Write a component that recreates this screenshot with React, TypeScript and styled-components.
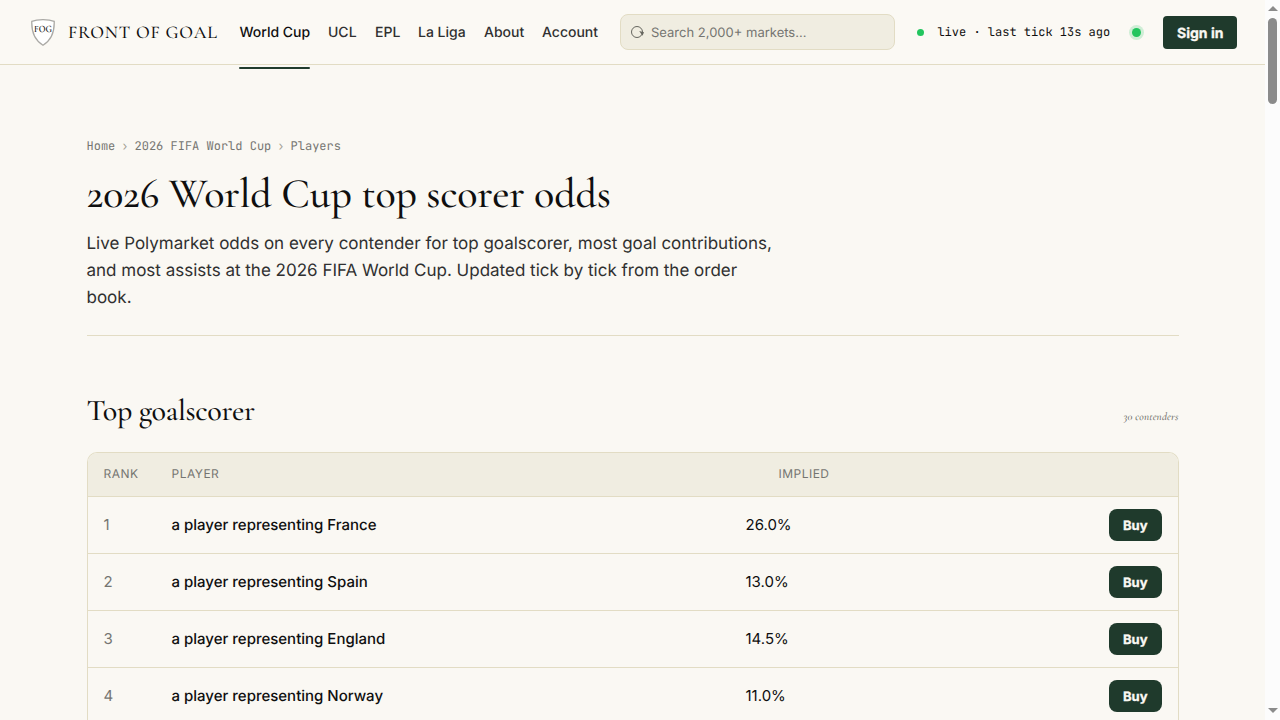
import React from "react";
import styled, { createGlobalStyle } from "styled-components";

const sans = `Inter, "Liberation Sans", sans-serif`;
const serif = `"Cormorant Garamond", "Liberation Serif", serif`;
const mono = `"JetBrains Mono", "DejaVu Sans Mono", monospace`;
const c = {
  bg: "#faf8f3",
  panel: "#f0ede1",
  line: "#e2dcc4",
  ink: "#0f0f0f",
  body: "#303030",
  muted: "#757571",
  green: "#1f3a2c",
  live: "#22c55e",
};

const GlobalStyle = createGlobalStyle`
  * { box-sizing: border-box; }
  body { margin: 0; background: ${c.bg}; color: ${c.ink}; font-family: ${sans}; overflow: hidden; text-rendering: geometricPrecision; }
  button { text-rendering: inherit; }
  h1, h2, p { margin: 0; font-weight: 400; }
`;

const Viewport = styled.div`
  display: flex;
  width: 1280px;
  height: 720px;
  overflow: hidden;
`;
const Page = styled.div`
  width: 1265px;
  height: 720px;
  overflow: hidden;
`;

const Header = styled.header`
  display: flex;
  align-items: center;
  height: 65px;
  padding: 0 28px 0 31px;
  background: #fbf9f4;
  border-bottom: 1px solid ${c.line};
`;
const Brand = styled.a`
  display: flex;
  align-items: center;
  width: 208px;
  gap: 13px;
`;
const BrandName = styled.span`
  padding-top: 2px;
  font: 500 18px/24px ${serif};
  letter-spacing: 0.79px;
  white-space: nowrap;
`;
const Nav = styled.nav`
  display: flex;
  gap: 18px;
  width: 381px;
  flex: none;
`;
const NavLink = styled.a<{ $active?: boolean; $w: number }>`
  position: relative;
  width: ${(p) => p.$w}px;
  padding: 2px 0 0 ${(p) => (p.$active ? 0.5 : 0)}px;
  font: 500 14px/20px ${sans};
  white-space: nowrap;
  color: ${(p) => (p.$active ? c.ink : c.body)};
  &::after {
    content: "";
    display: ${(p) => (p.$active ? "block" : "none")};
    position: absolute;
    left: 0;
    right: 0;
    top: 46px;
    height: 2px;
    border-radius: 1px;
    background: ${c.green};
  }
`;
const Search = styled.div`
  display: flex;
  align-items: center;
  gap: 7px;
  width: 275px;
  height: 36px;
  flex: none;
  padding-left: 10px;
  border: 1px solid ${c.line};
  border-radius: 8px;
  background: ${c.panel};
  font: 400 13px/18px ${sans};
  color: ${c.muted};
`;
const SearchHint = styled.span`
  padding-top: 2px;
`;
const Status = styled.div`
  display: flex;
  align-items: center;
  gap: 13.4px;
  width: 215px;
  flex: none;
  margin-left: 22px;
  font: 400 12px/16px ${mono};
  white-space: nowrap;
  color: ${c.ink};
`;
const Dot = styled.i`
  width: 7px;
  height: 7px;
  border-radius: 50%;
  background: ${c.live};
`;
const Pulse = styled.i`
  width: 9px;
  height: 9px;
  flex: none;
  border-radius: 50%;
  background: ${c.live};
  box-shadow: 0 0 0 3px rgba(34, 197, 94, 0.2);
`;
const Button = styled.button`
  flex: none;
  border: 0;
  background: ${c.green};
  color: ${c.bg};
  font-family: ${sans};
  font-weight: 700;
  -webkit-text-stroke: 0.3px ${c.bg};
`;
const SignIn = styled(Button)`
  width: 74px;
  height: 33px;
  margin-left: 22px;
  padding: 3px 0 0 0.5px;
  border-radius: 4px;
  font-size: 14px;
  line-height: 20px;
`;

const Main = styled.main`
  width: 1092px;
  margin-left: 86.5px;
  padding-top: 73px;
`;
const Crumbs = styled.div`
  display: flex;
  gap: 6px;
  font: 400 12px/16px ${mono};
  color: ${c.muted};
`;
const Sep = styled.span`
  color: #a19f92;
`;
const Title = styled.h1`
  height: 52px;
  margin-top: 15px;
  font: 550 42px/52px ${serif};
  letter-spacing: -0.2px;
  white-space: nowrap;
`;
const Lead = styled.p`
  width: 700px;
  margin-top: 10px;
  font: 400 17px/27px ${sans};
  color: ${c.body};
`;
const Rule = styled.hr`
  height: 1px;
  margin: 23px 0 0;
  border: 0;
  background: ${c.line};
`;
const SectionHead = styled.div`
  display: flex;
  justify-content: space-between;
  align-items: baseline;
  height: 39px;
  margin-top: 55px;
`;
const SectionTitle = styled.h2`
  font: 500 30px/40px ${serif};
  letter-spacing: -0.3px;
`;
const Count = styled.em`
  font: italic 500 11px/16px ${serif};
  letter-spacing: 0.17px;
  color: #6c6c66;
`;

const Table = styled.div`
  margin-top: 22px;
  border: 1px solid ${c.line};
  border-bottom: 0;
  border-radius: 10px 10px 0 0;
  overflow: hidden;
`;
const Row = styled.div<{ $head?: boolean }>`
  display: grid;
  grid-template-columns: 68px 574px 84px 1fr;
  align-items: center;
  height: ${(p) => (p.$head ? 44 : 57)}px;
  padding: ${(p) => (p.$head ? "0 16px 2px" : "0 16px")};
  border-bottom: 1px solid ${c.line};
  background: ${(p) => (p.$head ? c.panel : "transparent")};
  font: ${(p) => (p.$head ? "400 12px/16px" : "400 15px/20px")} ${sans};
  letter-spacing: ${(p) => (p.$head ? "0.48px" : "0")};
  color: ${(p) => (p.$head ? c.muted : c.ink)};
`;
const Rank = styled.span`
  color: ${c.muted};
`;
const Player = styled.span`
  font-weight: 500;
`;
const Right = styled.span`
  text-align: right;
`;
const Buy = styled(Button)`
  justify-self: end;
  width: 53px;
  height: 32px;
  padding: 2px 0 0 0.5px;
  border-radius: 8px;
  font-size: 13px;
  line-height: 18px;
`;

const Scrollbar = styled.div`
  display: flex;
  flex-direction: column;
  align-items: center;
  justify-content: space-between;
  width: 15px;
  height: 720px;
  padding: 6px 0 7px 0;
  background: #fcfcfc;
`;
const ScrollTop = styled.div`
  display: flex;
  flex-direction: column;
  align-items: center;
  gap: 7px;
`;
const Thumb = styled.div`
  width: 9px;
  height: 86px;
  border-radius: 5px;
  background: #8b8b8b;
`;
const Arrow = styled.i<{ $down?: boolean }>`
  width: 0;
  height: 0;
  border: 0 solid transparent;
  border-left-width: 5px;
  border-right-width: 5px;
  ${(p) => (p.$down ? "border-top" : "border-bottom")}: 5px solid #8b8b8b;
`;

const Shield = () => (
  <svg width="24" height="28" viewBox="0 0 24 28">
    <path
      d="M.8 3.3C4 2 8 1.6 12 1.6s8 .4 11.2 1.7C23.6 13.6 20 22.3 12 27.2 4 22.3.4 13.6.8 3.3Z"
      fill="#fff"
      stroke="#aaa9a5"
      strokeWidth="1.3"
    />
    <text x="12" y="13.6" textAnchor="middle" fontFamily={serif} fontSize="9.8" fontWeight="600" textLength="17.8" lengthAdjust="spacingAndGlyphs" fill="#111">
      FOG
    </text>
  </svg>
);

const SearchIcon = () => (
  <svg width="13" height="14" viewBox="0 0 13 14" fill="none" stroke="#66665f">
    <circle cx="6" cy="7" r="5.5" strokeWidth="1" />
    <path d="M8.2 6l4.8 1.3-1.5 3.4z" fill="#66665f" stroke="none" />
  </svg>
);

const links: [string, number][] = [
  ["World Cup", 71],
  ["UCL", 29],
  ["EPL", 25],
  ["La Liga", 48],
  ["About", 40],
  ["Account", 56],
];
const rows = [
  ["France", "26.0%"],
  ["Spain", "13.0%"],
  ["England", "14.5%"],
  ["Norway", "11.0%"],
];

export default function App() {
  return (
    <Viewport>
      <GlobalStyle />
      <Page>
        <Header>
          <Brand>
            <Shield />
            <BrandName>FRONT OF GOAL</BrandName>
          </Brand>
          <Nav>
            {links.map(([label, w], i) => (
              <NavLink key={label} $w={w} $active={i === 0}>
                {label}
              </NavLink>
            ))}
          </Nav>
          <Search>
            <SearchIcon />
            <SearchHint>Search 2,000+ markets...</SearchHint>
          </Search>
          <Status>
            <Dot />
            live · last tick 13s ago
          </Status>
          <Pulse />
          <SignIn>Sign in</SignIn>
        </Header>
        <Main>
          <Crumbs>
            <span>Home</span>
            <Sep>›</Sep>
            <span>2026 FIFA World Cup</span>
            <Sep>›</Sep>
            <span>Players</span>
          </Crumbs>
          <Title>2026 World Cup top scorer odds</Title>
          <Lead>
            Live Polymarket odds on every contender for top goalscorer, most goal contributions, and most assists at the
            2026 FIFA World Cup. Updated tick by tick from the order book.
          </Lead>
          <Rule />
          <SectionHead>
            <SectionTitle>Top goalscorer</SectionTitle>
            <Count>30 contenders</Count>
          </SectionHead>
          <Table>
            <Row $head>
              <span>RANK</span>
              <span>PLAYER</span>
              <Right>IMPLIED</Right>
            </Row>
            {rows.map(([team, odds], i) => (
              <Row key={team}>
                <Rank>{i + 1}</Rank>
                <Player>a player representing {team}</Player>
                <span>{odds}</span>
                <Buy>Buy</Buy>
              </Row>
            ))}
          </Table>
        </Main>
      </Page>
      <Scrollbar>
        <ScrollTop>
          <Arrow />
          <Thumb />
        </ScrollTop>
        <Arrow $down />
      </Scrollbar>
    </Viewport>
  );
}
